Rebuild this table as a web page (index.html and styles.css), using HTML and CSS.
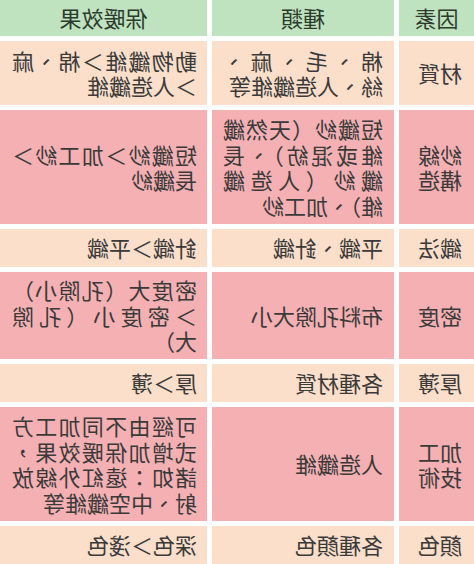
FILE: index.html
```html
<!DOCTYPE html>
<html lang="zh-Hant">
<head>
<meta charset="utf-8">
<link rel="stylesheet" href="styles.css">
</head>
<body>
<div class="table">
  <div class="cell head">因素</div>
  <div class="cell head">種類</div>
  <div class="cell head">保暖效果</div>

  <div class="cell factor peach">材質</div>
  <div class="cell peach">棉、毛、麻、絲、人造纖維等</div>
  <div class="cell effect peach">動物纖維＞棉、麻＞人造纖維</div>

  <div class="cell factor pink">紗線構造</div>
  <div class="cell pink">短纖紗（天然纖維或混紡）、長纖紗（人造纖維）、加工紗</div>
  <div class="cell effect pink">短纖紗＞加工紗＞長纖紗</div>

  <div class="cell factor peach">織法</div>
  <div class="cell peach">平織、針織</div>
  <div class="cell effect peach">針織＞平織</div>

  <div class="cell factor pink">密度</div>
  <div class="cell pink">布料孔隙大小</div>
  <div class="cell effect pink">密度大（孔隙小）＞密度小（孔隙大）</div>

  <div class="cell factor peach">厚薄</div>
  <div class="cell peach">各種材質</div>
  <div class="cell effect peach">厚＞薄</div>

  <div class="cell factor pink">加工技術</div>
  <div class="cell pink">人造纖維</div>
  <div class="cell effect pink">可經由不同加工方式增加保暖效果，諸如：遠紅外線放射、中空纖維等</div>

  <div class="cell factor peach">顏色</div>
  <div class="cell peach">各種顏色</div>
  <div class="cell effect peach">深色＞淺色</div>
</div>
</body>
</html>
```

FILE: styles.css
```css
html, body {
  margin: 0;
  padding: 0;
  background: #ffffff;
}

.table {
  width: 474px;
  height: 564px;
  display: grid;
  grid-template-columns: 75px 182px 207px;
  grid-template-rows: 36px 64px 114px 38px 87px 38px 114px 38px;
  column-gap: 5px;
  row-gap: 5px;
  transform: scaleX(-1);
  font-family: "Noto Sans CJK TC", "Noto Sans CJK SC", sans-serif;
  font-size: 22px;
  line-height: 25.5px;
  color: #3a3a3a;
}

.cell {
  display: flex;
  align-items: center;
  padding: 0 11px;
  text-align: justify;
  text-justify: inter-character;
  line-break: strict;
}

.factor {
  padding: 0 12px;
  text-align: left;
}

.effect {
  padding: 0 12px 0 10px;
}

.head {
  padding: 0;
  background: #bfe2bf;
  color: #2d3a2d;
  justify-content: center;
  text-align: center;
}

.peach {
  background: #fcdfca;
}

.pink {
  background: #f5b0b3;
}
```
